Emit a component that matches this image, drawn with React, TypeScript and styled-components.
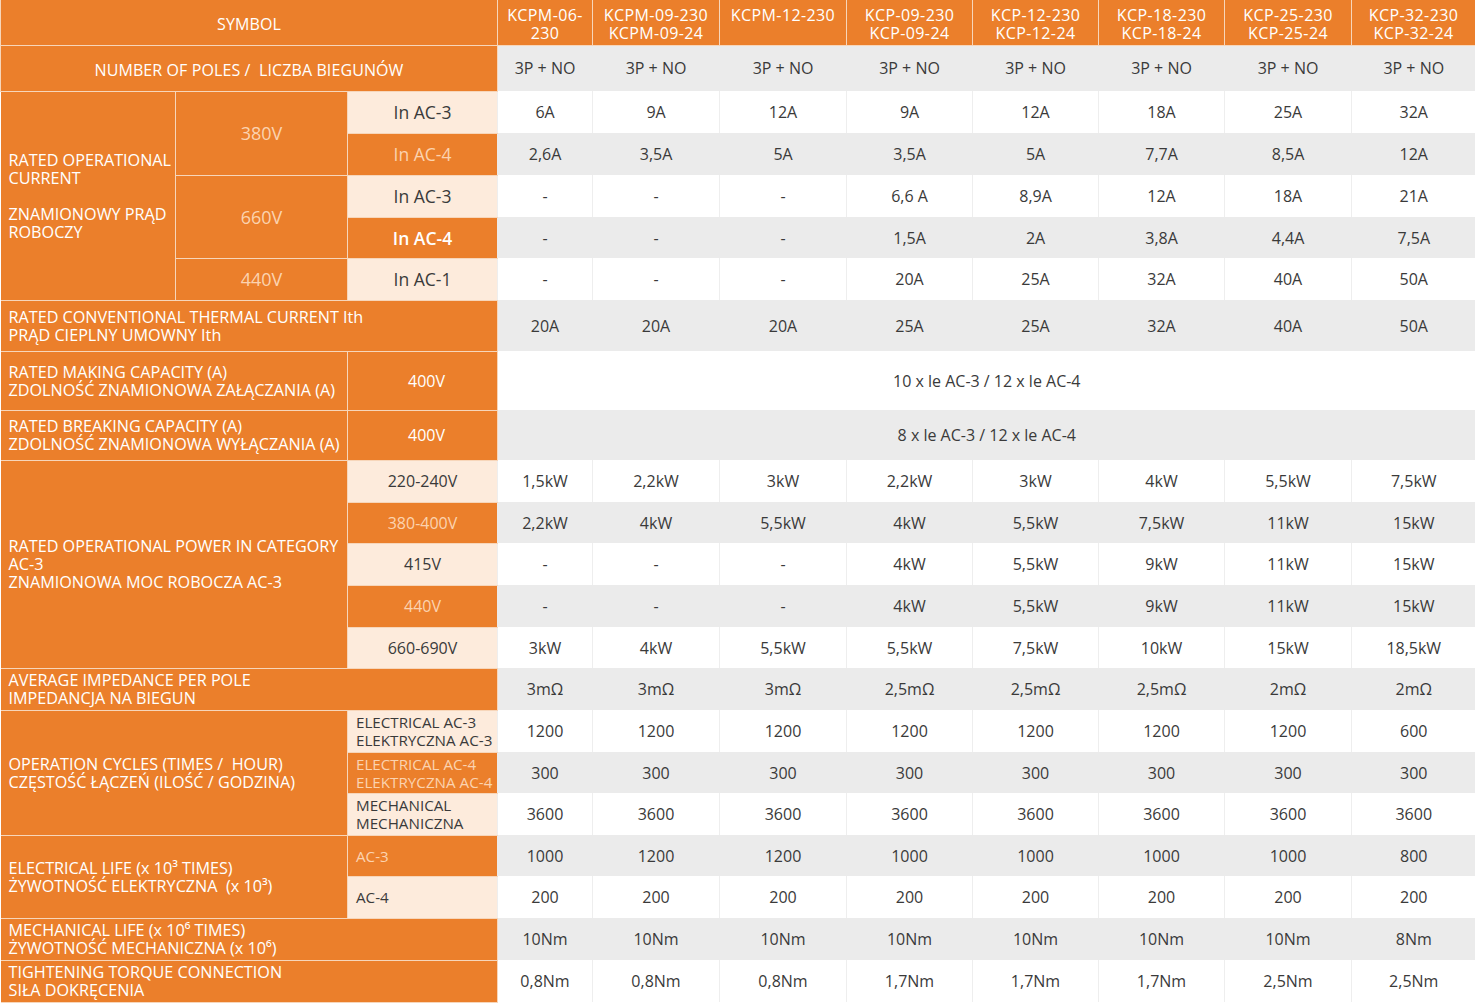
import React from "react";
import styled, { createGlobalStyle, css } from "styled-components";

const ORANGE = "#eb7f2b";
const PEACH = "#fdebdc";
const GRAY = "#ebebeb";
const LINE = "#f7d6ba";
const FAINT = "#fbd3b0";
const INK = "#3a3a3a";

const GlobalStyle = createGlobalStyle`
  html, body { margin: 0; padding: 0; background: #ffffff; }
  body { font-family: "Open Sans", "Noto Sans", "DejaVu Sans", sans-serif; }
`;

const Table = styled.table`
  width: 1475px;
  table-layout: fixed;
  border-collapse: collapse;
  border-spacing: 0;
`;

const Row = styled.tr<{ $h: number }>`
  height: ${(p) => p.$h}px;
`;

const orangeBase = css`
  background: ${ORANGE};
  border: 1px solid ${LINE};
  color: #ffffff;
  padding: 0;
`;

const HeadCell = styled.td<{ $top?: boolean }>`
  ${orangeBase};
  text-align: center;
  vertical-align: ${(p) => (p.$top ? "top" : "middle")};
  font-size: 16px;
  line-height: 18px;
  letter-spacing: ${(p) => (p.$top ? "0.4px" : "0.1px")};
  padding-top: ${(p) => (p.$top ? "6px" : "3px")};
  white-space: nowrap;
  border-top: none;
`;

const Line = styled.span`
  display: block;
  line-height: 18px;
`;

const LabelCell = styled.td`
  ${orangeBase};
  text-align: left;
  vertical-align: middle;
  padding-left: 8px;
  font-size: 16.2px;
  line-height: 18px;
  white-space: nowrap;
  border-left: none;
`;

const GroupCell = styled.td<{ $plain?: boolean }>`
  ${orangeBase};
  text-align: center;
  vertical-align: middle;
  font-size: ${(p) => (p.$plain ? 16 : 18)}px;
  color: ${(p) => (p.$plain ? "#ffffff" : FAINT)};
  padding-left: ${(p) => (p.$plain ? "8px" : "0")};
`;

const SubCell = styled.td<{
  $tone: "peach" | "orange";
  $size?: number;
  $left?: boolean;
  $strong?: boolean;
}>`
  background: ${(p) => (p.$tone === "peach" ? PEACH : ORANGE)};
  color: ${(p) => (p.$tone === "peach" ? INK : p.$strong ? "#ffffff" : FAINT)};
  font-weight: ${(p) => (p.$strong ? 600 : 400)};
  font-size: ${(p) => p.$size ?? 16}px;
  line-height: 18px;
  text-align: ${(p) => (p.$left ? "left" : "center")};
  padding: 0 0 0 ${(p) => (p.$left ? "8px" : "0")};
  vertical-align: middle;
  white-space: nowrap;
  border-top: 1px solid ${LINE};
  border-bottom: 1px solid ${LINE};
  border-left: 1px solid ${LINE};
`;

const DataCell = styled.td<{ $shade: "white" | "gray" }>`
  background: ${(p) => (p.$shade === "gray" ? GRAY : "#ffffff")};
  border-left: 1px solid ${(p) => (p.$shade === "gray" ? GRAY : "#eeeeee")};
  color: ${INK};
  font-size: 16px;
  text-align: center;
  vertical-align: middle;
  padding: 0;
  white-space: nowrap;
`;

const models = [
  ["KCPM-06-", "230"],
  ["KCPM-09-230", "KCPM-09-24"],
  ["KCPM-12-230"],
  ["KCP-09-230", "KCP-09-24"],
  ["KCP-12-230", "KCP-12-24"],
  ["KCP-18-230", "KCP-18-24"],
  ["KCP-25-230", "KCP-25-24"],
  ["KCP-32-230", "KCP-32-24"],
];

const widths = [175, 172, 150, 95, 127, 127, 126, 126, 126, 127, 124];

const Lines: React.FC<{ lines: string[] }> = ({ lines }) => (
  <>
    {lines.map((l, i) => (
      <Line key={i}>{l === "" ? "\u00a0" : l}</Line>
    ))}
  </>
);

const Values: React.FC<{ vals: string[]; shade: "white" | "gray" }> = ({ vals, shade }) => (
  <>
    {vals.map((v, i) => (
      <DataCell key={i} $shade={shade}>
        {v}
      </DataCell>
    ))}
  </>
);

const rep = (v: string, n = 8) => Array.from({ length: n }, () => v);

export default function App() {
  return (
    <>
      <GlobalStyle />
      <Table>
        <colgroup>
          {widths.map((w, i) => (
            <col key={i} style={{ width: w }} />
          ))}
        </colgroup>
        <tbody>
          <Row $h={45}>
            <HeadCell colSpan={3}>SYMBOL</HeadCell>
            {models.map((m, i) => (
              <HeadCell key={i} $top>
                <Lines lines={m} />
              </HeadCell>
            ))}
          </Row>
          <Row $h={46}>
            <HeadCell colSpan={3}>NUMBER OF POLES /&nbsp; LICZBA BIEGUNÓW</HeadCell>
            <Values vals={rep("3P + NO")} shade="gray" />
          </Row>

          <Row $h={42}>
            <LabelCell rowSpan={5}>
              <Lines lines={["RATED OPERATIONAL", "CURRENT", "", "ZNAMIONOWY PRĄD", "ROBOCZY"]} />
            </LabelCell>
            <GroupCell rowSpan={2}>380V</GroupCell>
            <SubCell $tone="peach" $size={17.5}>In AC-3</SubCell>
            <Values vals={["6A", "9A", "12A", "9A", "12A", "18A", "25A", "32A"]} shade="white" />
          </Row>
          <Row $h={42}>
            <SubCell $tone="orange" $size={17.5}>In AC-4</SubCell>
            <Values vals={["2,6A", "3,5A", "5A", "3,5A", "5A", "7,7A", "8,5A", "12A"]} shade="gray" />
          </Row>
          <Row $h={42}>
            <GroupCell rowSpan={2}>660V</GroupCell>
            <SubCell $tone="peach" $size={17.5}>In AC-3</SubCell>
            <Values vals={["-", "-", "-", "6,6 A", "8,9A", "12A", "18A", "21A"]} shade="white" />
          </Row>
          <Row $h={41}>
            <SubCell $tone="orange" $size={17.5} $strong>In AC-4</SubCell>
            <Values vals={["-", "-", "-", "1,5A", "2A", "3,8A", "4,4A", "7,5A"]} shade="gray" />
          </Row>
          <Row $h={42}>
            <GroupCell>440V</GroupCell>
            <SubCell $tone="peach" $size={17.5}>In AC-1</SubCell>
            <Values vals={["-", "-", "-", "20A", "25A", "32A", "40A", "50A"]} shade="white" />
          </Row>

          <Row $h={51}>
            <LabelCell colSpan={3}>
              <Lines lines={["RATED CONVENTIONAL THERMAL CURRENT Ith", "PRĄD CIEPLNY UMOWNY Ith"]} />
            </LabelCell>
            <Values vals={["20A", "20A", "20A", "25A", "25A", "32A", "40A", "50A"]} shade="gray" />
          </Row>

          <Row $h={59}>
            <LabelCell colSpan={2}>
              <Lines lines={["RATED MAKING CAPACITY (A)", "ZDOLNOŚĆ ZNAMIONOWA ZAŁĄCZANIA (A)"]} />
            </LabelCell>
            <GroupCell $plain>400V</GroupCell>
            <DataCell colSpan={8} $shade="white">10 x le AC-3 / 12 x le AC-4</DataCell>
          </Row>
          <Row $h={50}>
            <LabelCell colSpan={2}>
              <Lines lines={["RATED BREAKING CAPACITY (A)", "ZDOLNOŚĆ ZNAMIONOWA WYŁĄCZANIA (A)"]} />
            </LabelCell>
            <GroupCell $plain>400V</GroupCell>
            <DataCell colSpan={8} $shade="gray">8 x le AC-3 / 12 x le AC-4</DataCell>
          </Row>

          <Row $h={42}>
            <LabelCell colSpan={2} rowSpan={5}>
              <Lines lines={["RATED OPERATIONAL POWER IN CATEGORY", "AC-3", "ZNAMIONOWA MOC ROBOCZA AC-3"]} />
            </LabelCell>
            <SubCell $tone="peach">220-240V</SubCell>
            <Values vals={["1,5kW", "2,2kW", "3kW", "2,2kW", "3kW", "4kW", "5,5kW", "7,5kW"]} shade="white" />
          </Row>
          <Row $h={41}>
            <SubCell $tone="orange">380-400V</SubCell>
            <Values vals={["2,2kW", "4kW", "5,5kW", "4kW", "5,5kW", "7,5kW", "11kW", "15kW"]} shade="gray" />
          </Row>
          <Row $h={42}>
            <SubCell $tone="peach">415V</SubCell>
            <Values vals={["-", "-", "-", "4kW", "5,5kW", "9kW", "11kW", "15kW"]} shade="white" />
          </Row>
          <Row $h={42}>
            <SubCell $tone="orange">440V</SubCell>
            <Values vals={["-", "-", "-", "4kW", "5,5kW", "9kW", "11kW", "15kW"]} shade="gray" />
          </Row>
          <Row $h={41}>
            <SubCell $tone="peach">660-690V</SubCell>
            <Values vals={["3kW", "4kW", "5,5kW", "5,5kW", "7,5kW", "10kW", "15kW", "18,5kW"]} shade="white" />
          </Row>

          <Row $h={42}>
            <LabelCell colSpan={3}>
              <Lines lines={["AVERAGE IMPEDANCE PER POLE", "IMPEDANCJA NA BIEGUN"]} />
            </LabelCell>
            <Values vals={["3mΩ", "3mΩ", "3mΩ", "2,5mΩ", "2,5mΩ", "2,5mΩ", "2mΩ", "2mΩ"]} shade="gray" />
          </Row>

          <Row $h={42}>
            <LabelCell colSpan={2} rowSpan={3}>
              <Lines lines={["OPERATION CYCLES (TIMES /\u00a0 HOUR)", "CZĘSTOŚĆ ŁĄCZEŃ (ILOŚĆ / GODZINA)"]} />
            </LabelCell>
            <SubCell $tone="peach" $left $size={15.2}>
              <Lines lines={["ELECTRICAL AC-3", "ELEKTRYCZNA AC-3"]} />
            </SubCell>
            <Values vals={[...rep("1200", 7), "600"]} shade="white" />
          </Row>
          <Row $h={41}>
            <SubCell $tone="orange" $left $size={15.2}>
              <Lines lines={["ELECTRICAL AC-4", "ELEKTRYCZNA AC-4"]} />
            </SubCell>
            <Values vals={rep("300")} shade="gray" />
          </Row>
          <Row $h={42}>
            <SubCell $tone="peach" $left $size={15.2}>
              <Lines lines={["MECHANICAL", "MECHANICZNA"]} />
            </SubCell>
            <Values vals={rep("3600")} shade="white" />
          </Row>

          <Row $h={41}>
            <LabelCell colSpan={2} rowSpan={2}>
              <Lines lines={["ELECTRICAL LIFE (x 10³ TIMES)", "ŻYWOTNOŚĆ ELEKTRYCZNA\u00a0 (x 10³)"]} />
            </LabelCell>
            <SubCell $tone="orange" $left $size={15.2}>AC-3</SubCell>
            <Values vals={["1000", "1200", "1200", "1000", "1000", "1000", "1000", "800"]} shade="gray" />
          </Row>
          <Row $h={42}>
            <SubCell $tone="peach" $left $size={15.2}>AC-4</SubCell>
            <Values vals={rep("200")} shade="white" />
          </Row>

          <Row $h={42}>
            <LabelCell colSpan={3}>
              <Lines lines={["MECHANICAL LIFE (x 10⁶ TIMES)", "ŻYWOTNOŚĆ MECHANICZNA (x 10⁶)"]} />
            </LabelCell>
            <Values vals={[...rep("10Nm", 7), "8Nm"]} shade="gray" />
          </Row>
          <Row $h={42}>
            <LabelCell colSpan={3}>
              <Lines lines={["TIGHTENING TORQUE CONNECTION", "SIŁA DOKRĘCENIA"]} />
            </LabelCell>
            <Values vals={["0,8Nm", "0,8Nm", "0,8Nm", "1,7Nm", "1,7Nm", "1,7Nm", "2,5Nm", "2,5Nm"]} shade="white" />
          </Row>
        </tbody>
      </Table>
    </>
  );
}
